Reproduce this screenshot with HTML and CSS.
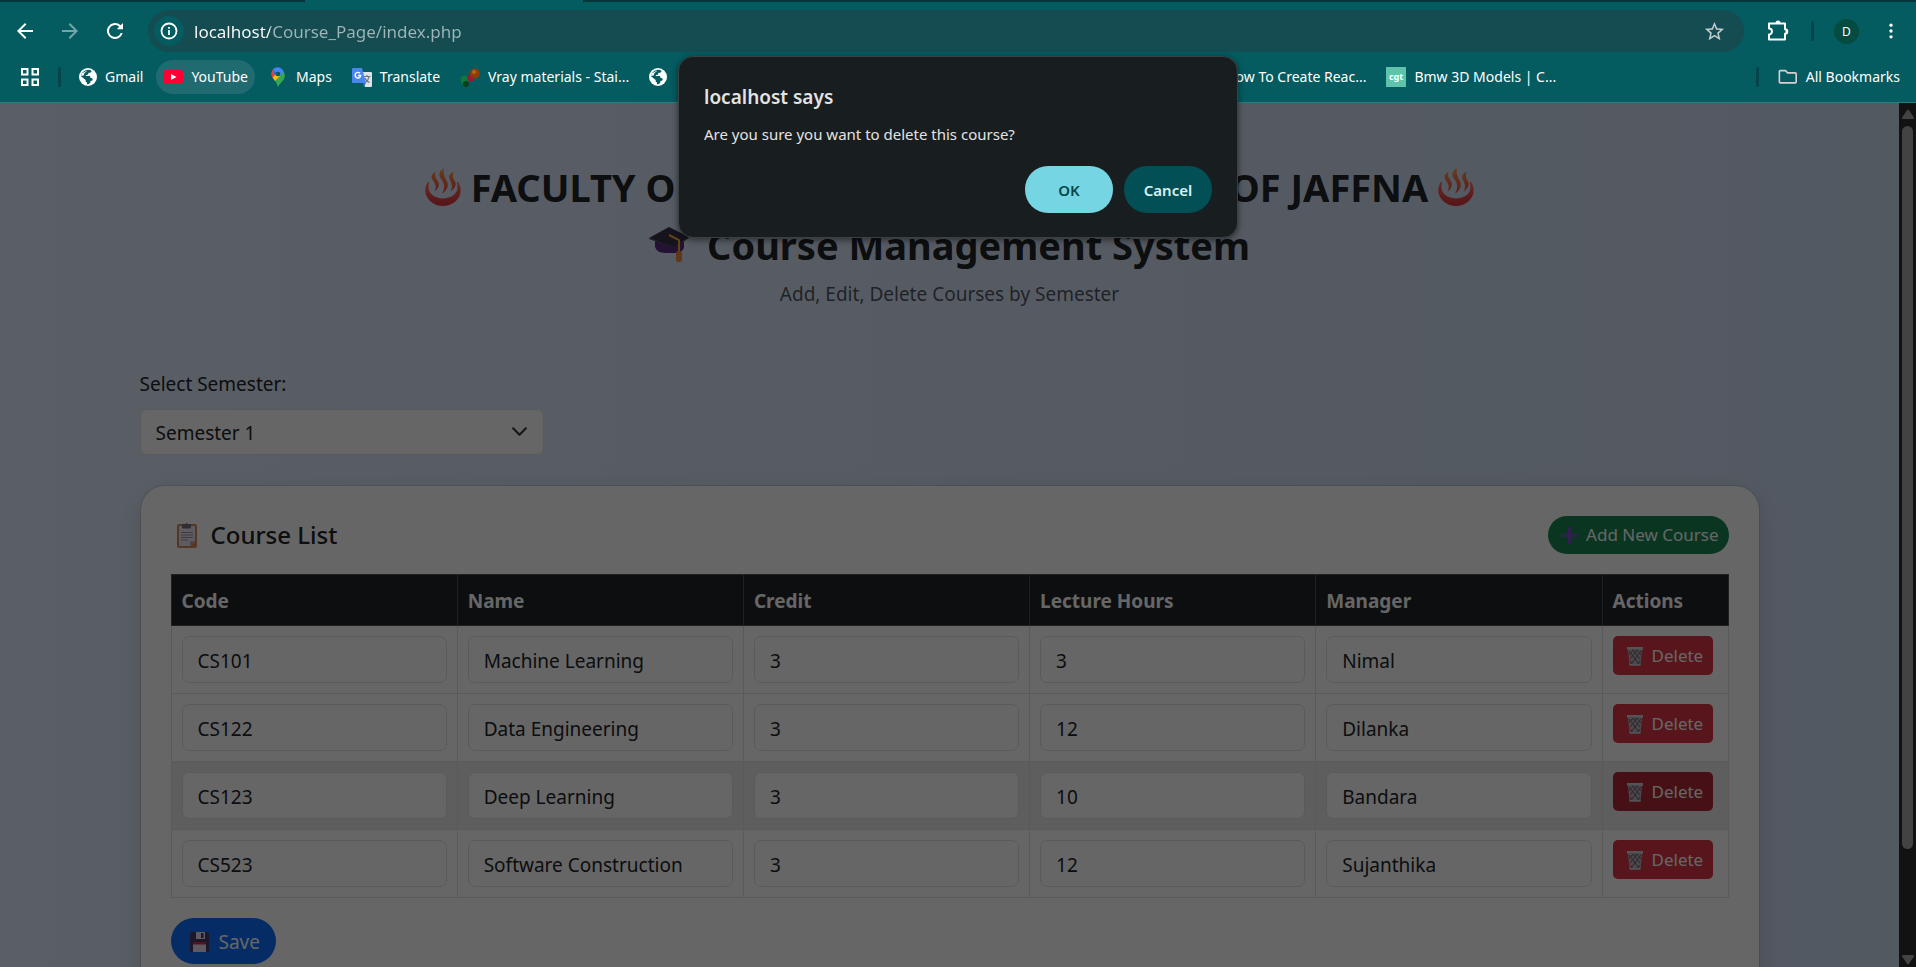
FILE: index.html
```html
<!DOCTYPE html>
<html lang="en">
<head>
<meta charset="utf-8">
<title>Course Management System</title>
<link rel="stylesheet" href="styles.css">
</head>
<body>
<svg class="defs" aria-hidden="true">
  <defs>
    <linearGradient id="steam" x1="0" y1="0" x2="0" y2="1"><stop offset="0" stop-color="#ff9a4a"/><stop offset="1" stop-color="#f0413c"/></linearGradient>
    <linearGradient id="bowl" x1="0" y1="0" x2="0" y2="1"><stop offset="0" stop-color="#ff6a5c"/><stop offset="1" stop-color="#d8323c"/></linearGradient>
    <symbol id="i-spring" viewBox="0 0 40 42">
      <path fill="url(#bowl)" d="M5 15C1 19 1 25 2 29c3 8 10 12 18 12s15-4 18-12c1-4 1-10-3-14-1 2 1 5 0 9-2 6-8 9-15 9S7 30 5 24c-1-4 1-7 0-9z"/>
      <path fill="url(#steam)" d="M12 5c-5 3-5 6-2 10 3 4 3 7 1 11 5-4 6-8 3-12-2-3-3-5-2-9zM21 1c-6 4-6 8-2 13 3 4 3 9 0 14 6-4 8-10 4-15-2-4-3-7-2-12zM31 5c-6 3-5 6-3 10 2 4 2 7 0 11 5-4 7-8 4-12-2-3-2-5-1-9z"/>
    </symbol>
    <symbol id="i-globe" viewBox="0 0 18 18">
      <circle cx="9" cy="9" r="9" fill="#fff"/>
      <path fill="#045b60" d="M8 2c1.500-.4 3.200 0 4.500.8-.1 1.400-.8 2-2.200 2-.9 0-1 .5-1.100 1.300-.1.700-.7.900-1.700.9-.6 0-.7.400-.7.900h3.400c.8 0 1.200.5 1.200 1.300v.9c1.600 0 2.500.6 2.300 1.700-.2.900-1 1.100-2.200 1.200l-.2 1.600c-.2.900-1.200 1-1.900 1.600-.7.300-1.300.1-1.400-.3v-1.600c-.9 0-1.300-.6-1.300-1.400v-.8L2 8.200C2.300 5.200 4.700 2.500 8 2z"/>
      <path fill="#fff" d="M2.800 5.500L8 2.600c-.4 1-1 1.400-1.800 1.900C5 5.200 5.200 6.500 4.500 7.500L2 8z"/>
    </symbol>
    <symbol id="i-trash" viewBox="0 0 18 20">
      <path fill="#b9b3bd" d="M1 1h16v3h-1l-1.500 15.500h-11L2 4H1z"/>
      <path stroke="#765a66" stroke-width="1" fill="none" d="M3 5l10 13M7 4l7 9M11 4l4 5M15 5L5 18M11 4L4 13M7 4L3 9M4 15l3 4M14 15l-3 4"/>
      <path fill="#d5d0d8" d="M1 1h16v2H1zM3.500 18h11v1.500h-11z"/>
    </symbol>
  </defs>
</svg>

<div class="browser">
  <header class="chrome">
    <div class="tabstrip"><span class="active-tab"></span></div>
    <div class="toolbar">
      <button class="icon-btn" aria-label="Back"><svg viewBox="0 0 24 24"><path d="M20 11H7.800l5.600-5.600L12 4l-8 8 8 8 1.400-1.400L7.800 13H20z"/></svg></button>
      <button class="icon-btn dim" aria-label="Forward"><svg viewBox="0 0 24 24"><path d="M4 11h12.200l-5.600-5.600L12 4l8 8-8 8-1.400-1.400 5.600-5.600H4z"/></svg></button>
      <button class="icon-btn" aria-label="Reload"><svg viewBox="0 0 24 24"><path d="M17.650 6.350A8 8 0 1 0 19.730 14h-2.080A6 6 0 1 1 12 6c1.660 0 3.140.69 4.220 1.780L13.800 10.200H20V4z"/></svg></button>
      <div class="omnibox">
        <button class="site-info" aria-label="View site information"><svg viewBox="0 0 18 18"><circle cx="9" cy="9" r="7.500" fill="none" stroke="#fff" stroke-width="1.800"/><path fill="#fff" d="M8.100 8h1.800v5H8.100zM8.100 5h1.800v1.800H8.100z"/></svg></button>
        <input class="url" type="text" aria-label="Address" value="localhost/Course_Page/index.php">
        <button class="star" aria-label="Bookmark this tab"><svg viewBox="0 0 24 24"><path fill="#c3cccd" d="M22 9.240l-7.190-.62L12 2 9.190 8.630 2 9.240l5.460 4.730L5.820 21 12 17.270 18.180 21l-1.630-7.030zM12 15.400l-3.760 2.270 1-4.280-3.320-2.880 4.380-.38L12 6.100l1.710 4.040 4.380.38-3.320 2.880 1 4.280z"/></svg></button>
      </div>
      <button class="icon-btn" aria-label="Extensions"><svg viewBox="0 0 24 24"><path fill="none" stroke="#fff" stroke-width="2" stroke-linejoin="round" d="M3 4.500h16v5.700a2 2 0 0 1 0 4.600v5.700H3v-5a3 3 0 0 0 0-6z"/><path d="M9.500 4a2.500 2.500 0 0 1 5 0zM19.500 10a2.500 2.500 0 0 1 0 5z"/></svg></button>
      <span class="divider"></span>
      <button class="avatar" aria-label="Profile">D</button>
      <button class="icon-btn menu" aria-label="Menu"><svg viewBox="0 0 24 24"><circle cx="12" cy="5" r="2"/><circle cx="12" cy="12" r="2"/><circle cx="12" cy="19" r="2"/></svg></button>
    </div>
    <nav class="bookmarks" aria-label="Bookmarks">
      <button class="apps" aria-label="Apps"><svg viewBox="0 0 18 18"><path fill="none" stroke="#fff" stroke-width="2" d="M1 1h5.500v5.500H1zM11.500 1H17v5.500h-5.500zM1 11.500h5.500V17H1zM11.500 11.500H17V17h-5.500z"/></svg></button>
      <span class="divider"></span>
      <a class="bookmark" href="#"><svg class="globe"><use href="#i-globe"/></svg>Gmail</a>
      <a class="bookmark hovered" href="#"><svg viewBox="0 0 20 20"><rect y="3" width="20" height="14" rx="3" fill="#f03"/><path fill="#fff" d="M8 7l5.500 3L8 13z"/></svg>YouTube</a>
      <a class="bookmark" href="#"><svg viewBox="0 0 20 20"><path fill="#34a853" d="M10 20c-1-3-2-5-3.500-7L15 4c2 2 2.500 5 1 8-2 3-4 4-6 8z"/><path fill="#fbbc04" d="M7 14l-2.500-3.500L8 6l4 3z"/><path fill="#ea4335" d="M4.500 10.500C2.500 8 3 4.500 5 2.500L9 6z"/><path fill="#1a73e8" d="M4.800 2.700L9 6l-2 2.500z"/><path fill="#4285f4" d="M4.800 2.700C8-1 13-.5 15.500 4.500L12 9 8.500 6z"/><circle cx="10" cy="7" r="2.300" fill="#045b60"/></svg>Maps</a>
      <a class="bookmark" href="#"><svg viewBox="0 0 20 20"><path fill="#dfe3e6" d="M9 5h10a1 1 0 0 1 1 1v13a1 1 0 0 1-1 1h-6z"/><path stroke="#6f7b85" fill="none" stroke-width="1.200" d="M11.500 9.500h7M15 8v1.500M17 9.500c-.5 3-2 5-4 6M13 11c.7 2 2.500 4 4.500 4.500"/><path fill="#4a86f0" d="M1 1h9l4 15H1a1 1 0 0 1-1-1V2a1 1 0 0 1 1-1z"/><path fill="#2c5fc7" d="M10.500 16H14l-2.500 3.500z"/><path fill="none" stroke="#fff" stroke-width="1.400" d="M8 6.300A2.800 2.800 0 1 0 8.700 8.500H6"/></svg>Translate</a>
      <a class="bookmark" href="#"><svg viewBox="0 0 20 20"><circle cx="5" cy="13" r="4.500" fill="#0c7a3c"/><circle cx="6" cy="17" r="3" fill="#07401f"/><circle cx="10.500" cy="11" r="3.500" fill="#9c1638"/><circle cx="15" cy="6.500" r="5" fill="#8c3d08"/><circle cx="14" cy="5" r="2" fill="#c0601a"/></svg>Vray materials - Stai...</a>
      <a class="bookmark" href="#" aria-label="Website"><svg class="globe"><use href="#i-globe"/></svg></a>
      <a class="bookmark after-gap" href="#">How To Create Reac...</a>
      <a class="bookmark" href="#"><svg viewBox="0 0 20 20"><rect width="20" height="20" fill="#5fc3ac"/><text x="10" y="13" text-anchor="middle" class="cgt">cgt</text></svg>Bmw 3D Models | C...</a>
      <span class="divider last"></span>
      <button class="bookmark all"><svg viewBox="0 0 22 20"><path fill="none" stroke="#d7cfd0" stroke-width="1.800" stroke-linejoin="round" d="M2.500 3h5.800l2.200 2.500h8.500q1 0 1 1v9q0 1-1 1H2.500q-1 0-1-1V4q0-1 1-1z"/></svg>All Bookmarks</button>
    </nav>
  </header>

  <div class="viewport">
    <main class="page">
      <div class="container">
        <div class="hero">
          <h1 class="title"><svg class="spring"><use href="#i-spring"/></svg>FACULTY OF ENGINEERING, UNIVERSITY OF JAFFNA<svg class="spring"><use href="#i-spring"/></svg></h1>
          <h2 class="title system"><svg class="hat" viewBox="0 0 40 36"><path fill="#5b2f86" d="M6 14v6c1 3 4 6 10 6h10c5 0 9-3 9-6v-6z"/><path fill="#38304a" d="M20 0l20 10-15 10L0 11z"/><path fill="none" stroke="#4d4560" d="M0 11.500L25 20.500 40 10.500"/><path fill="none" stroke="#f5a83a" stroke-width="2" d="M20 8l10 5v13"/><rect x="27" y="24" width="6" height="11" rx="2.500" fill="#f08a3a"/></svg>Course Management System</h2>
          <p class="subtitle">Add, Edit, Delete Courses by Semester</p>
        </div>

        <div class="semester">
          <label for="semester">Select Semester:</label>
          <div class="select-wrap">
            <select id="semester"><option>Semester 1</option><option>Semester 2</option></select>
            <svg viewBox="0 0 16 16"><path fill="none" stroke="#343a40" stroke-width="2" stroke-linecap="round" stroke-linejoin="round" d="m2 5 6 6 6-6"/></svg>
          </div>
        </div>

        <section class="card">
          <div class="card-head">
            <h3><svg class="clip" viewBox="0 0 20 25"><rect y="1" width="20" height="24" rx="2" fill="#d98a55"/><path fill="#ece6f2" d="M2 3h16v15l-5 5H2z"/><path fill="#b9aec4" d="M13 18h5l-5 5z"/><rect x="5" y="1" width="9" height="4.500" rx="1" fill="#7b7083"/><circle cx="9.500" cy="1.500" r="1.500" fill="#7b7083"/><path stroke="#9d94aa" d="M4 9.500h12M4 12h12M4 14.500h12M4 17h7"/></svg>Course List</h3>
            <button class="btn add"><svg viewBox="0 0 17 17"><path fill="#7a4fc9" d="M7 0h3v7h7v3h-7v7H7v-7H0V7h7z"/></svg>Add New Course</button>
          </div>
          <table class="courses">
            <thead>
              <tr><th>Code</th><th>Name</th><th>Credit</th><th>Lecture Hours</th><th>Manager</th><th class="actions">Actions</th></tr>
            </thead>
            <tbody>
              <tr>
                <td><input aria-label="Code" value="CS101"></td><td><input aria-label="Name" value="Machine Learning"></td><td><input aria-label="Credit" value="3"></td><td><input aria-label="Lecture Hours" value="3"></td><td><input aria-label="Manager" value="Nimal"></td>
                <td><button class="btn delete"><svg><use href="#i-trash"/></svg>Delete</button></td>
              </tr>
              <tr>
                <td><input aria-label="Code" value="CS122"></td><td><input aria-label="Name" value="Data Engineering"></td><td><input aria-label="Credit" value="3"></td><td><input aria-label="Lecture Hours" value="12"></td><td><input aria-label="Manager" value="Dilanka"></td>
                <td><button class="btn delete"><svg><use href="#i-trash"/></svg>Delete</button></td>
              </tr>
              <tr class="current">
                <td><input aria-label="Code" value="CS123"></td><td><input aria-label="Name" value="Deep Learning"></td><td><input aria-label="Credit" value="3"></td><td><input aria-label="Lecture Hours" value="10"></td><td><input aria-label="Manager" value="Bandara"></td>
                <td><button class="btn delete"><svg><use href="#i-trash"/></svg>Delete</button></td>
              </tr>
              <tr>
                <td><input aria-label="Code" value="CS523"></td><td><input aria-label="Name" value="Software Construction"></td><td><input aria-label="Credit" value="3"></td><td><input aria-label="Lecture Hours" value="12"></td><td><input aria-label="Manager" value="Sujanthika"></td>
                <td><button class="btn delete"><svg><use href="#i-trash"/></svg>Delete</button></td>
              </tr>
            </tbody>
          </table>
          <button class="btn save"><svg viewBox="0 0 19 20"><rect width="19" height="20" rx="2" fill="#4c3a66"/><path fill="#e9e2f2" d="M6 0h9v7H6zM3 12h13v8H3z"/><path fill="#4c3a66" d="M11 1h2.500v5H11z"/><path fill="#e0264a" d="M3 10h13v2.500H3z"/></svg>Save</button>
        </section>
      </div>
      <div class="backdrop"></div>
    </main>
    <div class="scrollbar" aria-hidden="true">
      <svg viewBox="0 0 12 10"><path fill="#434343" stroke="#434343" stroke-width="2" stroke-linejoin="round" d="M6 1.500L11 9H1z"/></svg>
      <div class="track"><div class="thumb"></div></div>
      <svg viewBox="0 0 12 10"><path fill="#434343" stroke="#434343" stroke-width="2" stroke-linejoin="round" d="M6 8.500L11 1H1z"/></svg>
    </div>
  </div>

  <div class="dialog" role="dialog" aria-labelledby="dialog-title">
    <h2 id="dialog-title">localhost says</h2>
    <p>Are you sure you want to delete this course?</p>
    <div class="dialog-actions">
      <button class="ok">OK</button>
      <button class="cancel">Cancel</button>
    </div>
  </div>
</div>
</body>
</html>
```
FILE: styles.css
```css
* { box-sizing: border-box; }

body {
  margin: 0;
  font-family: "Noto Sans", "Open Sans", sans-serif;
  font-size: 19px;
  line-height: 30px;
  color: #212529;
}

h1, h2, h3, p { margin: 0; }
button, input, select { font: inherit; }
button { border: 0; padding: 0; background: none; color: inherit; cursor: pointer; }
a { color: inherit; text-decoration: none; }
.defs { position: absolute; width: 0; height: 0; }

.browser {
  position: relative;
  display: flex;
  flex-direction: column;
  height: 100vh;
  overflow: hidden;
}

/* Browser toolbar */
.chrome {
  background: #045b60;
  border-bottom: 1px solid #2f7c80;
  color: #fff;
}
.tabstrip { height: 2px; padding-left: 305px; background: #04363c; }
.active-tab { display: block; width: 278px; height: 2px; background: #045b60; }

.toolbar {
  display: flex;
  align-items: center;
  height: 58px;
  padding: 0 13px;
}
.icon-btn { width: 24px; height: 24px; margin-right: 21px; }
.icon-btn svg { display: block; width: 24px; height: 24px; fill: #fff; }
.icon-btn.dim { opacity: .45; }
.omnibox {
  display: flex;
  align-items: center;
  flex: 1;
  height: 42px;
  margin-right: 22px;
  padding: 0 18px 0 6px;
  border-radius: 21px;
  background: #144c51;
}
.site-info {
  display: grid;
  place-items: center;
  width: 30px;
  height: 30px;
  margin-right: 10px;
  border-radius: 50%;
  background: #045b60;
}
.site-info svg { width: 18px; height: 18px; }
.url {
  flex: 1;
  min-width: 0;
  height: 30px;
  padding: 1px 0 0;
  border: 0;
  font-size: 17px;
  color: transparent;
  background: linear-gradient(to right, #fff 76px, #9fb5b7 76px);
  -webkit-background-clip: text;
  background-clip: text;
}
.star svg { display: block; width: 23px; height: 23px; }
.divider { width: 3px; height: 20px; border-radius: 2px; background: #04444a; }
.avatar {
  width: 25px;
  height: 25px;
  margin: 0 20px;
  border-radius: 50%;
  background: #044c3f;
  font-size: 12px;
  line-height: 25px;
}
.icon-btn.menu { width: 24px; margin: 0; }
.icon-btn.menu svg { height: 20px; margin: 2px 0; }

.bookmarks {
  display: flex;
  align-items: center;
  height: 42px;
  padding: 0 9px 8px 21px;
  font-size: 14px;
  white-space: nowrap;
}
.apps { margin-right: 19px; }
.apps svg { display: block; width: 18px; height: 18px; }
.bookmarks .divider + .bookmark { margin-left: 11px; }
.bookmark {
  display: flex;
  align-items: center;
  gap: 8px;
  height: 34px;
  margin-right: 6px;
  padding: 0 7px;
  border-radius: 17px;
}
.bookmark svg { width: 20px; height: 20px; }
.bookmark svg.globe { width: 18px; height: 18px; }
.bookmark.hovered { background: #1f6b70; }
.bookmark.after-gap { margin-left: 538px; }
.cgt { font-size: 9px; font-weight: 700; fill: #fff; }
.divider.last { margin-left: auto; }
.bookmarks .bookmark.all { margin: 0 0 0 12px; }

/* Page area */
.viewport { display: flex; flex: 1; min-height: 0; }
.page {
  position: relative;
  flex: 1;
  overflow: hidden;
  background: linear-gradient(to right, #e0eafc, #cfdef3);
}
.backdrop { position: absolute; inset: 0; background: rgba(0, 0, 0, .6); }
.container { max-width: 1620px; margin: 0 auto; }

.hero { padding: 60px 0; text-align: center; }
.title {
  display: flex;
  justify-content: center;
  align-items: center;
  gap: 9px;
  margin-bottom: 10px;
  font-size: 38px;
  line-height: 48px;
  font-weight: 700;
  white-space: nowrap;
}
.title.system { gap: 18px; }
.spring { width: 38px; height: 42px; }
.hat { width: 40px; height: 36px; }
.subtitle { color: rgba(33, 37, 41, .75); }

.semester { width: 404px; margin-bottom: 30px; }
.semester label { display: block; margin-bottom: 10px; }
.select-wrap { position: relative; }
.select-wrap select {
  display: block;
  width: 100%;
  height: 46px;
  padding: 2px 15px 0;
  appearance: none;
  border: 1px solid #dee2e6;
  border-radius: 7px;
  background: #fff;
  color: #212529;
}
.select-wrap svg {
  position: absolute;
  top: 14px;
  right: 16px;
  width: 17px;
  height: 17px;
}

.card {
  padding: 30px;
  border: 1px solid rgba(0, 0, 0, .1);
  border-radius: 25px;
  background: #fff;
  background-clip: padding-box;
  box-shadow: 0 8px 24px rgba(0, 0, 0, .12);
  min-height: 560px;
}
.card-head {
  display: flex;
  justify-content: space-between;
  align-items: center;
  margin-bottom: 20px;
}
.card-head h3 {
  display: flex;
  align-items: center;
  gap: 14px;
  padding-left: 6px;
  font-size: 24px;
  font-weight: 500;
}
.clip { width: 20px; height: 25px; }

.btn {
  display: inline-flex;
  align-items: center;
  color: #fff;
}
.btn.add {
  gap: 8px;
  height: 38px;
  padding: 0 10px 0 13px;
  border-radius: 19px;
  background: #198754;
  font-size: 17px;
}
.btn.add svg { width: 17px; height: 17px; }
.btn.save {
  gap: 10px;
  height: 46px;
  padding: 2px 16px 0 19px;
  border-radius: 23px;
  background: #0d6efd;
}
.btn.save svg { width: 19px; height: 20px; }
.btn.delete {
  gap: 8px;
  height: 39px;
  padding: 0 10px 0 13px;
  border-radius: 5px;
  background: #dc3545;
  font-size: 17px;
}
.btn.delete svg { width: 18px; height: 20px; }

.courses {
  width: 100%;
  margin-bottom: 20px;
  border-collapse: collapse;
  table-layout: fixed;
}
.courses th, .courses td {
  padding: 10px;
  border: 1px solid #dee2e6;
  text-align: left;
  vertical-align: top;
}
.courses th {
  padding: 11px 10px 9px;
  background: #212529;
  border-color: #4d5154;
  color: #fff;
  font-weight: 700;
}
.courses .actions { width: 126px; }
.courses .current td { background: #ececec; }
.courses .current .delete { background: #b02a37; }
.courses input {
  display: block;
  width: 100%;
  height: 47px;
  padding: 2px 15px 0;
  border: 1px solid #dee2e6;
  border-radius: 7px;
  background: #fff;
  color: #212529;
}

.scrollbar {
  display: flex;
  flex-direction: column;
  align-items: center;
  width: 17px;
  padding: 6px 0 2px;
  background: #121212;
}
.scrollbar svg { width: 12px; height: 10px; }
.track { flex: 1; width: 11px; padding: 7px 0; }
.thumb { height: 88%; border-radius: 6px; background: #434343; }

/* Confirmation dialog */
.dialog {
  position: absolute;
  top: 56px;
  left: 50%;
  width: 560px;
  margin-left: -280px;
  padding: 24px 25px;
  border: 1px solid #3a4143;
  border-radius: 15px;
  background: #181d1f;
  box-shadow: 0 2px 6px rgba(0, 0, 0, .5);
  color: #e3e3e3;
}
.dialog h2 { margin-bottom: 9px; font-size: 19px; line-height: 32px; font-weight: 600; }
.dialog p { margin-bottom: 20px; font-size: 15px; line-height: 24px; }
.dialog-actions { display: flex; justify-content: flex-end; gap: 11px; }
.dialog-actions button {
  width: 88px;
  height: 47px;
  border-radius: 23px;
  font-size: 15px;
  font-weight: 600;
}
.dialog .ok { background: #76d5e2; color: #04474d; }
.dialog .cancel { background: #024f55; color: #d8f2f5; }
```
